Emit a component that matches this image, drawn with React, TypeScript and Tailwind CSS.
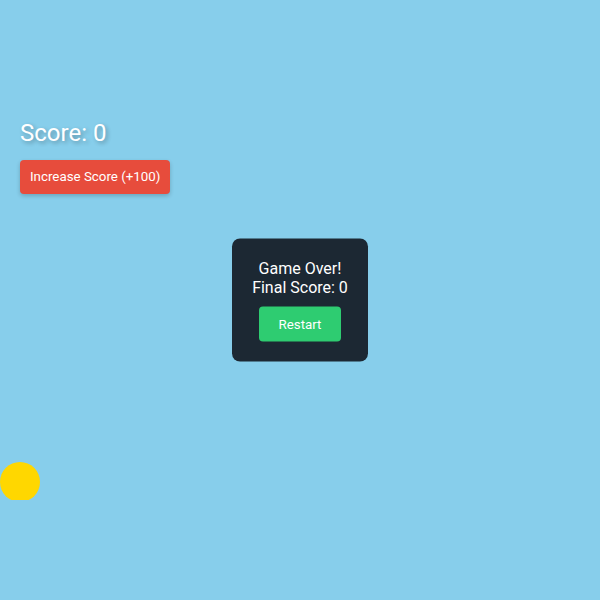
import { useState } from "react"

const App = () => {
  const [score, setScore] = useState(0)

  return (
    <div className="relative h-[600px] w-[600px] overflow-hidden bg-[#87ceeb] font-['Roboto',sans-serif]">
      <div className="flex flex-col items-start gap-3 px-5 pt-[118px]">
        <div className="text-[24px] leading-[30px] text-white [text-shadow:2px_2px_4px_rgba(0,0,0,0.3)]">
          Score: {score}
        </div>
        <button
          onClick={() => setScore(score + 100)}
          className="h-[34px] rounded-[4px] bg-[#e74c3c] px-[10px] text-[13.333px] text-white shadow-[0_2px_4px_rgba(0,0,0,0.2)]"
        >
          Increase Score (+100)
        </button>
      </div>

      {/* bird */}
      <div className="absolute left-0 top-[462px] h-[38px] w-[40px] overflow-hidden">
        <div className="h-10 w-10 rounded-full bg-[#ffd700]" />
      </div>

      <div className="absolute left-1/2 top-1/2 flex w-[136px] -translate-x-1/2 -translate-y-1/2 flex-col items-center rounded-[8px] bg-[#1c2833] p-5 text-center text-white">
        <div className="text-[16px] leading-[19px]">Game Over!</div>
        <div className="text-[16px] leading-[19px]">Final Score: {score}</div>
        <button
          onClick={() => setScore(0)}
          className="mt-[10px] h-[35px] rounded-[4px] bg-[#2ecc71] px-5 text-[13.333px] text-white"
        >
          Restart
        </button>
      </div>
    </div>
  )
}

export default App
